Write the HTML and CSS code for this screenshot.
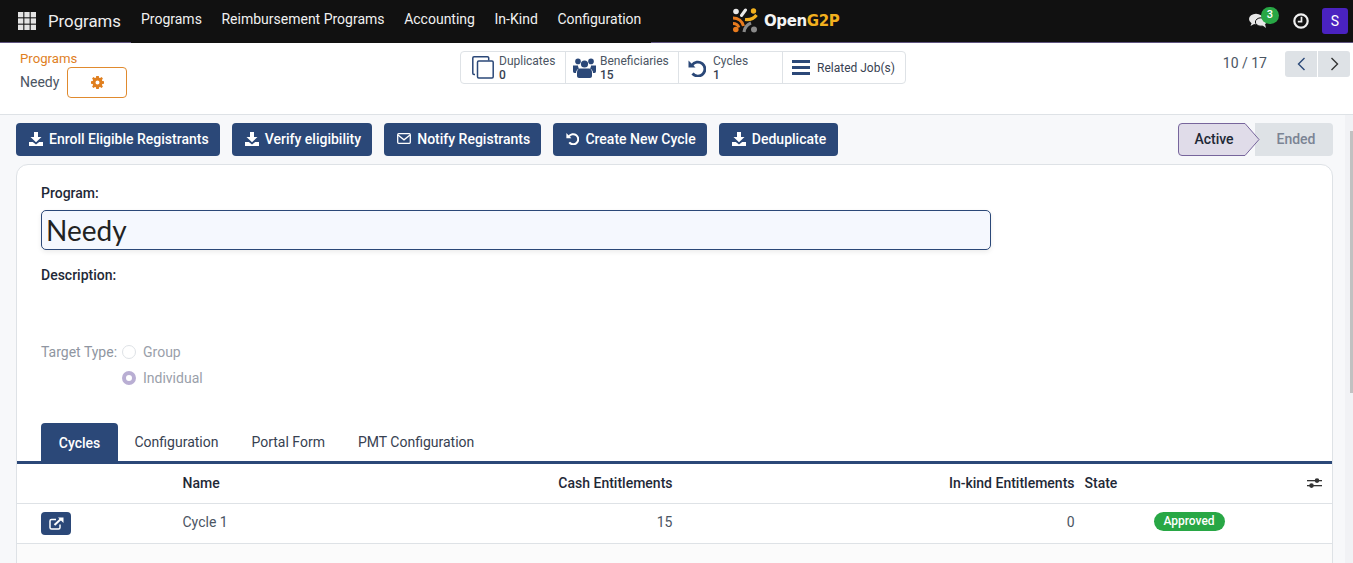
FILE: index.html
```html
<!DOCTYPE html>
<html lang="en">
<head>
  <meta charset="UTF-8">
  <title>Programs - OpenG2P</title>
  <link rel="stylesheet" href="styles.css">
</head>
<body>

  <!-- Top bar -->
  <header class="navbar">
    <div class="nav-left">
      <div class="app-brand">
        <svg class="apps-icon" width="18" height="18" viewBox="0 0 18 18" fill="#e4e4e4">
          <rect x="0" y="0" width="5.300" height="5.300"/><rect x="6.350" y="0" width="5.300" height="5.300"/><rect x="12.700" y="0" width="5.300" height="5.300"/>
          <rect x="0" y="6.350" width="5.300" height="5.300"/><rect x="6.350" y="6.350" width="5.300" height="5.300"/><rect x="12.700" y="6.350" width="5.300" height="5.300"/>
          <rect x="0" y="12.700" width="5.300" height="5.300"/><rect x="6.350" y="12.700" width="5.300" height="5.300"/><rect x="12.700" y="12.700" width="5.300" height="5.300"/>
        </svg>
        <span class="brand-name">Programs</span>
      </div>
      <nav class="menu">
        <a>Programs</a>
        <a>Reimbursement Programs</a>
        <a>Accounting</a>
        <a>In-Kind</a>
        <a>Configuration</a>
      </nav>
    </div>
    <div class="logo">
      <svg width="25" height="25" viewBox="0 0 25 25">
        <circle cx="3" cy="3.500" r="2.800" fill="#e8e8e8"/>
        <path d="M8.500 7.500 L12.500 2" stroke="#e8e8e8" stroke-width="3" stroke-linecap="round" fill="none"/>
        <circle cx="20.500" cy="3" r="2.700" fill="#f2b01e"/>
        <path d="M12 11.500 C17 12 21 10.500 23.500 7" stroke="#f2b01e" stroke-width="3.200" fill="none"/>
        <path d="M0 10 C5 10 9.500 13 10.500 18" stroke="#e87b1e" stroke-width="3" fill="none"/>
        <path d="M0 15.500 C3 15.500 5 17 6 19.500" stroke="#e87b1e" stroke-width="2.800" fill="none"/>
        <circle cx="2.800" cy="21.500" r="2.800" fill="#e87b1e"/>
        <path d="M11 24 C11.500 20 14 16.500 18 15" stroke="#8a8a8a" stroke-width="3.200" fill="none"/>
        <circle cx="21" cy="21.500" r="3" fill="#8a8a8a"/>
      </svg>
      <span class="logo-text">Open<span class="logo-accent">G2P</span></span>
    </div>
    <div class="nav-right">
      <div class="chat">
        <svg width="18" height="16" viewBox="0 0 18 16" fill="#e8e8e8">
          <ellipse cx="7" cy="6" rx="7" ry="5.200"/>
          <path d="M3 9 L1.500 13 L7 10z"/>
          <ellipse cx="12" cy="9" rx="5.600" ry="4.200" stroke="#111" stroke-width="1"/>
          <path d="M13 12 L17 15 L16 11z"/>
        </svg>
        <span class="chat-badge">3</span>
      </div>
      <svg class="clock" width="16" height="16" viewBox="0 0 16 16">
        <circle cx="8" cy="8" r="6.700" fill="none" stroke="#f0f0f0" stroke-width="2.200"/>
        <path d="M8.500 3.800 V8.600 H4.800" fill="none" stroke="#f0f0f0" stroke-width="1.700"/>
      </svg>
      <div class="avatar">S</div>
    </div>
  </header>

  <!-- Breadcrumb, stat buttons, pager -->
  <section class="control-panel">
    <div class="crumbs">
      <a class="crumb-link">Programs</a>
      <div class="crumb-row">
        <span class="crumb-current">Needy</span>
        <button class="gear-btn">
          <svg width="13" height="13" viewBox="0 0 13 13" fill="#e07f1f">
            <path fill-rule="evenodd" d="M5.200 0h2.600l.3 1.700 1 .4L10.600 1.100l1.300 1.300-1 1.500.4 1L13 5.200v2.600l-1.700.3-.4 1 1 1.500-1.300 1.300-1.500-1-1 .4L7.800 13H5.200l-.3-1.700-1-.4-1.500 1-1.300-1.300 1-1.500-.4-1L0 7.800V5.200l1.700-.3.400-1-1-1.500 1.300-1.300 1.500 1 1-.4zM6.500 4.500a2 2 0 1 0 0 4 2 2 0 0 0 0-4z"/>
          </svg>
        </button>
      </div>
    </div>
    <div class="stat-buttons">
      <div class="stat stat-dup">
        <svg width="22" height="23" viewBox="0 0 22 23" fill="none" stroke="#2b4878" stroke-width="1.500">
          <path d="M3 18.500 H2 a1.200 1.200 0 0 1-1.200-1.200 V2 A1.200 1.200 0 0 1 2 .8 H15.500 a1.200 1.200 0 0 1 1.200 1.200 V4.500"/>
          <rect x="5.500" y="5" width="15.700" height="17" rx="1.200"/>
        </svg>
        <div class="stat-text"><span>Duplicates</span><b>0</b></div>
      </div>
      <div class="stat stat-ben">
        <svg width="23" height="20" viewBox="0 0 23 20" fill="#2b4878">
          <circle cx="5" cy="3.400" r="2.800"/><circle cx="18" cy="3.400" r="2.800"/><circle cx="11.500" cy="6" r="3.600"/>
          <path d="M0 7.500 h5 a4 4 0 0 0 1 3 c-2 1-3 2.500-3 4.500 H1.500 C.5 15 0 14 0 13z"/>
          <path d="M23 7.500 h-5 a4 4 0 0 1-1 3 c2 1 3 2.500 3 4.500 h1.500 c1 0 1.500-1 1.500-2z"/>
          <path d="M7 10.500 h9 c2 0 3 2 3 4 v3.500 c0 1-1 2-2 2 H6 c-1 0-2-1-2-2 v-3.500 c0-2 1-4 3-4z"/>
        </svg>
        <div class="stat-text"><span>Beneficiaries</span><b>15</b></div>
      </div>
      <div class="stat stat-cyc">
        <svg width="18" height="18" viewBox="0 0 18 18" fill="none">
          <path d="M4 6.300 A7 7 0 1 1 4.500 14.500" stroke="#2b4878" stroke-width="2.800"/>
          <path d="M.5 1.500 V8.500 H7.500z" fill="#2b4878"/>
        </svg>
        <div class="stat-text"><span>Cycles</span><b>1</b></div>
      </div>
      <div class="stat stat-job">
        <svg width="18" height="15" viewBox="0 0 18 15" fill="#2b4878">
          <rect y="0" width="18" height="3"/><rect y="6" width="18" height="3"/><rect y="12" width="18" height="3"/>
        </svg>
        <div class="stat-text stat-single"><span>Related Job(s)</span></div>
      </div>
    </div>
    <div class="pager">
      <span class="pager-count">10 / 17</span>
      <div class="pager-btns">
        <button class="pager-btn">
          <svg width="9" height="14" viewBox="0 0 9 14" fill="none" stroke="#2b4878" stroke-width="1.400"><path d="M7.500 1 L1.500 7 L7.500 13"/></svg>
        </button>
        <button class="pager-btn">
          <svg width="9" height="14" viewBox="0 0 9 14" fill="none" stroke="#333" stroke-width="1.400"><path d="M1.500 1 L7.500 7 L1.500 13"/></svg>
        </button>
      </div>
    </div>
  </section>

  <main class="content">
    <div class="action-row">
      <div class="actions">
        <button class="btn">
          <svg class="ico-dl" width="14" height="14" viewBox="0 0 14 14" fill="#fff"><path d="M5 0 H9 V5 H12.500 L7 10.200 L1.500 5 H5z"/><path d="M0 10 H3.800 L7 12.600 L10.200 10 H14 V14 H0z"/></svg>
          Enroll Eligible Registrants
        </button>
        <button class="btn">
          <svg class="ico-dl" width="14" height="14" viewBox="0 0 14 14" fill="#fff"><path d="M5 0 H9 V5 H12.500 L7 10.200 L1.500 5 H5z"/><path d="M0 10 H3.800 L7 12.600 L10.200 10 H14 V14 H0z"/></svg>
          Verify eligibility
        </button>
        <button class="btn">
          <svg width="14" height="11" viewBox="0 0 14 11" fill="none" stroke="#fff" stroke-width="1.300"><rect x=".7" y=".7" width="12.600" height="9.600" rx="1"/><path d="M1 2 L7 6.800 L13 2"/></svg>
          Notify Registrants
        </button>
        <button class="btn">
          <svg width="13" height="13" viewBox="0 0 18 18" fill="none"><path d="M4 6.300 A7 7 0 1 1 4.500 14.500" stroke="#fff" stroke-width="2.800"/><path d="M.5 1.500 V8.500 H7.500z" fill="#fff"/></svg>
          Create New Cycle
        </button>
        <button class="btn">
          <svg class="ico-dl" width="14" height="14" viewBox="0 0 14 14" fill="#fff"><path d="M5 0 H9 V5 H12.500 L7 10.200 L1.500 5 H5z"/><path d="M0 10 H3.800 L7 12.600 L10.200 10 H14 V14 H0z"/></svg>
          Deduplicate
        </button>
      </div>
      <div class="status-bar">
        <div class="status status-ended">Ended</div>
        <svg class="status-active" width="82" height="33" viewBox="0 0 82 33">
          <path d="M4 .5 H67 L81 16.500 L67 32.500 H4 A3.500 3.500 0 0 1 .5 29 V4 A3.500 3.500 0 0 1 4 .5z" fill="#e0dce9" stroke="#77659c"/>
          <text x="36" y="21" text-anchor="middle" class="status-label">Active</text>
        </svg>
      </div>
    </div>

    <div class="sheet">
      <div class="sheet-head">
        <label class="field-label">Program:</label>
        <input class="title-input" value="Needy">
        <label class="field-label desc-label">Description:</label>
        <div class="target">
          <span class="target-label">Target Type:</span>
          <div class="radios">
            <div class="radio-row"><span class="radio"></span>Group</div>
            <div class="radio-row"><span class="radio radio-on"></span>Individual</div>
          </div>
        </div>
      </div>

      <div class="tabs">
        <a class="tab tab-active">Cycles</a>
        <a class="tab">Configuration</a>
        <a class="tab">Portal Form</a>
        <a class="tab">PMT Configuration</a>
      </div>

      <div class="table">
        <div class="tr th">
          <div class="c-open"></div>
          <div class="c-name">Name</div>
          <div class="c-cash">Cash Entitlements</div>
          <div class="c-kind">In-kind Entitlements</div>
          <div class="c-state">State</div>
          <div class="c-opt">
            <svg width="15" height="12" viewBox="0 0 15 12" fill="#333">
              <rect y="3" width="15" height="1.300"/><rect y="8" width="15" height="1.300"/>
              <circle cx="10" cy="3.600" r="2.300"/><circle cx="4.500" cy="8.600" r="2.300"/>
            </svg>
          </div>
        </div>
        <div class="tr td">
          <div class="c-open">
            <button class="open-btn">
              <svg width="15" height="13" viewBox="0 0 15 13" fill="none" stroke="#fff" stroke-width="1.500">
                <path d="M7 2.500 H2.500 A1.500 1.500 0 0 0 1 4 V10.500 A1.500 1.500 0 0 0 2.500 12 H9.500 A1.500 1.500 0 0 0 11 10.500 V7.500"/>
                <path d="M5.500 8 L12.500 1.500" stroke-width="2"/>
                <path d="M9 .5 H14.500 V6z" fill="#fff" stroke="none"/>
              </svg>
            </button>
          </div>
          <div class="c-name">Cycle 1</div>
          <div class="c-cash">15</div>
          <div class="c-kind">0</div>
          <div class="c-state"><span class="pill">Approved</span></div>
          <div class="c-opt"></div>
        </div>
      </div>
      <div class="table-foot"></div>
    </div>
  </main>

  <div class="scrollbar"><div class="thumb"></div></div>

</body>
</html>
```

FILE: styles.css
```css
* {
  box-sizing: border-box;
}

html, body {
  height: 100%;
}

body {
  margin: 0;
  height: 563px;
  overflow: hidden;
  position: relative;
  font-family: Roboto, "Liberation Sans", sans-serif;
  font-size: 14px;
  color: #374151;
  background: #f7f8fa;
}

button {
  font-family: inherit;
  cursor: pointer;
}

/* Top bar */
.navbar {
  height: 43px;
  background: #111;
  border-bottom: 1px solid #5f5580;
  display: flex;
  align-items: flex-start;
  justify-content: space-between;
  color: #f0f0f0;
  position: relative;
}

.nav-left {
  display: flex;
  align-items: center;
  height: 42px;
}

.app-brand {
  display: flex;
  align-items: center;
  gap: 12px;
  padding-left: 18px;
  width: 131px;
  height: 42px;
}

.brand-name {
  font-size: 16.800px;
  color: #eee;
}

.menu {
  display: flex;
  gap: 19.600px;
  height: 43px;
  width: 520px;
  padding-left: 10px;
  padding-bottom: 5px;
  align-items: center;
  font-size: 14px;
  color: #f0f0f0;
  background: #111;
}

.logo {
  display: flex;
  align-items: center;
  gap: 6px;
  position: absolute;
  left: 733px;
  top: 8px;
}

.logo-text {
  font-family: "DejaVu Sans", sans-serif;
  font-size: 15px;
  font-weight: 700;
  color: #f4f4f4;
  letter-spacing: -0.4px;
}

.logo-accent {
  color: #f2b01e;
}

.nav-right {
  display: flex;
  align-items: center;
  padding-right: 5px;
  height: 42px;
}

.chat {
  position: relative;
  width: 18px;
  height: 16px;
  margin-right: 26px;
  margin-top: -1px;
}

.chat-badge {
  position: absolute;
  left: 12px;
  top: -6px;
  width: 18px;
  height: 17px;
  border-radius: 9px;
  background: #28a745;
  color: #fff;
  font-size: 11px;
  font-weight: 500;
  text-align: center;
  line-height: 15px;
}

.clock {
  margin-right: 13px;
  margin-top: -1px;
}

.avatar {
  width: 26px;
  height: 26px;
  background: #4a22c0;
  border-radius: 3px;
  color: #fff;
  font-size: 14px;
  text-align: center;
  line-height: 26px;
  margin-top: -1px;
}

/* Control panel */
.control-panel {
  height: 72px;
  background: #fff;
  border-bottom: 1px solid #dee2e6;
  display: flex;
  justify-content: space-between;
  padding: 8px 3px 0 20px;
  position: relative;
}

.crumb-link {
  color: #e07f1f;
  font-size: 13.200px;
  line-height: 16px;
  display: block;
}

.crumb-row {
  display: flex;
  align-items: center;
  gap: 8px;
}

.crumb-current {
  color: #4b5563;
  font-size: 14px;
  margin-bottom: 2px;
}

.gear-btn {
  width: 60px;
  height: 31px;
  background: #fff;
  border: 1px solid #e08a2e;
  border-radius: 4px;
  padding: 0;
  display: flex;
  align-items: center;
  justify-content: center;
}

.stat-buttons {
  position: absolute;
  left: 460px;
  top: 8px;
  height: 33px;
  width: 446px;
  display: flex;
  border: 1px solid #dee2e6;
  border-radius: 4px;
  background: #fff;
}

.stat {
  display: flex;
  align-items: center;
  border-right: 1px solid #dee2e6;
  color: #374151;
}

.stat:last-child {
  border-right: 0;
}

.stat-dup {
  width: 105px;
  padding-left: 11px;
  gap: 5px;
}

.stat-ben {
  width: 113px;
  padding-left: 7px;
  gap: 4px;
}

.stat-cyc {
  width: 104px;
  padding-left: 9px;
  gap: 7px;
}

.stat-job {
  flex: 1;
  padding-left: 9px;
  gap: 7px;
}

.stat-text {
  display: flex;
  flex-direction: column;
  font-size: 12px;
  line-height: 14px;
  color: #4b5563;
}

.stat-text b {
  font-weight: 500;
  color: #374151;
}

.stat-single {
  color: #374151;
}

.pager {
  display: flex;
  align-items: flex-start;
  gap: 18px;
}

.pager-count {
  color: #4b5563;
  font-size: 14px;
  line-height: 26px;
  margin-top: -1px;
}

.pager-btns {
  display: flex;
  gap: 1px;
}

.pager-btn {
  width: 32px;
  height: 26px;
  background: #dee2e6;
  border: 0;
  padding: 0;
  display: flex;
  align-items: center;
  justify-content: center;
  border-radius: 3px 0 0 3px;
}

.pager-btn + .pager-btn {
  border-radius: 0 3px 3px 0;
}

/* Main area */
.content {
  padding: 8px 20px 0 16px;
}

.action-row {
  display: flex;
  justify-content: space-between;
  align-items: flex-start;
}

.actions {
  display: flex;
  gap: 12.200px;
}

.btn {
  height: 33px;
  background: #2b4878;
  border: 0;
  border-radius: 4px;
  color: #fff;
  font-size: 14px;
  font-weight: 500;
  padding: 0 11px 2px 13px;
  display: flex;
  align-items: center;
  gap: 6px;
}

.btn:last-child {
  padding-right: 12px;
}

.status-bar {
  display: flex;
  width: 155px;
  position: relative;
}

.status-ended {
  margin-left: 77px;
  width: 78px;
  height: 33px;
  background: #dee2e6;
  border-radius: 0 4px 4px 0;
  color: #7b8494;
  font-weight: 500;
  text-align: center;
  line-height: 33px;
  padding-left: 4px;
}

.status-active {
  position: absolute;
  left: 0;
  top: 0;
}

.status-label {
  font-family: Roboto, sans-serif;
  font-size: 14px;
  font-weight: 500;
  fill: #1f2937;
}

.sheet {
  margin-top: 8px;
  width: 1317px;
  background: #fff;
  border: 1px solid #dee2e6;
  border-radius: 12px;
  height: 420px;
}

.sheet-head {
  padding: 18px 24px 0 24px;
}

.field-label {
  display: block;
  font-size: 14px;
  font-weight: 500;
  color: #1f2937;
  line-height: 20px;
}

.title-input {
  display: block;
  width: 950px;
  height: 40px;
  margin-top: 7px;
  padding: 0 4px;
  font-family: Lato, sans-serif;
  font-size: 28px;
  color: #222;
  background: #f5f8fe;
  border: 1px solid #2b4878;
  border-radius: 5px;
  box-shadow: 0 2px 5px rgba(0, 0, 0, 0.08);
  outline: 0;
}

.desc-label {
  margin-top: 15px;
}

.target {
  display: flex;
  margin-top: 57px;
  color: #8f96a1;
}

.target-label {
  width: 81px;
  line-height: 20px;
}

.radios {
  display: flex;
  flex-direction: column;
  gap: 6px;
}

.radio-row {
  display: flex;
  align-items: center;
  gap: 7px;
  height: 20px;
  color: #9aa0aa;
}

.radio {
  width: 14px;
  height: 14px;
  border-radius: 50%;
  border: 1px solid #dee2e6;
  background: #fff;
}

.radio-on {
  border: 4px solid #b9aed3;
}

/* Tabs */
.tabs {
  display: flex;
  margin-top: 35px;
  padding-left: 24px;
  height: 38px;
}

.tab {
  padding: 0 16.500px;
  line-height: 39px;
  color: #374151;
  white-space: nowrap;
}

.tab-active {
  width: 77px;
  padding: 0;
  text-align: center;
  background: #2b4878;
  color: #fff;
  font-weight: 500;
  border-radius: 4px 4px 0 0;
  line-height: 41px;
}

/* Table */
.table {
  border-top: 3px solid #2b4878;
}

.tr {
  display: flex;
  align-items: center;
  border-bottom: 1px solid #dee2e6;
  height: 40px;
}

.th {
  font-weight: 500;
  color: #1f2937;
  padding-bottom: 2px;
}

.td {
  color: #4b5563;
}

.td .c-name,
.td .c-cash,
.td .c-kind,
.td .c-state {
  margin-bottom: 4px;
}

.c-open {
  width: 165.500px;
  padding-left: 24px;
  display: flex;
}

.c-name {
  width: 200px;
}

.c-cash {
  width: 290px;
  text-align: right;
}

.c-kind {
  width: 402px;
  text-align: right;
}

.c-state {
  width: 221px;
  padding-left: 10px;
}

.td .c-state {
  padding-left: 79px;
}

.c-opt {
  flex: 1;
  display: flex;
  padding-left: 11px;
}

.open-btn {
  width: 30px;
  height: 23px;
  background: #2b4878;
  border: 0;
  border-radius: 4px;
  padding: 0;
  display: flex;
  align-items: center;
  justify-content: center;
}

.pill {
  display: inline-block;
  width: 71px;
  height: 19px;
  border-radius: 10px;
  background: #28a745;
  color: #fff;
  font-size: 12px;
  font-weight: 500;
  text-align: center;
  line-height: 19px;
  vertical-align: middle;
}

.table-foot {
  height: 20px;
  background: #fbfbfb;
}

/* Scrollbar */
.scrollbar {
  position: absolute;
  right: 0;
  top: 115px;
  bottom: 0;
  width: 8px;
  background: #f1f2f5;
}

.thumb {
  position: absolute;
  right: 0;
  top: 16px;
  width: 3px;
  height: 262px;
  background: #c1c1c1;
}
```
